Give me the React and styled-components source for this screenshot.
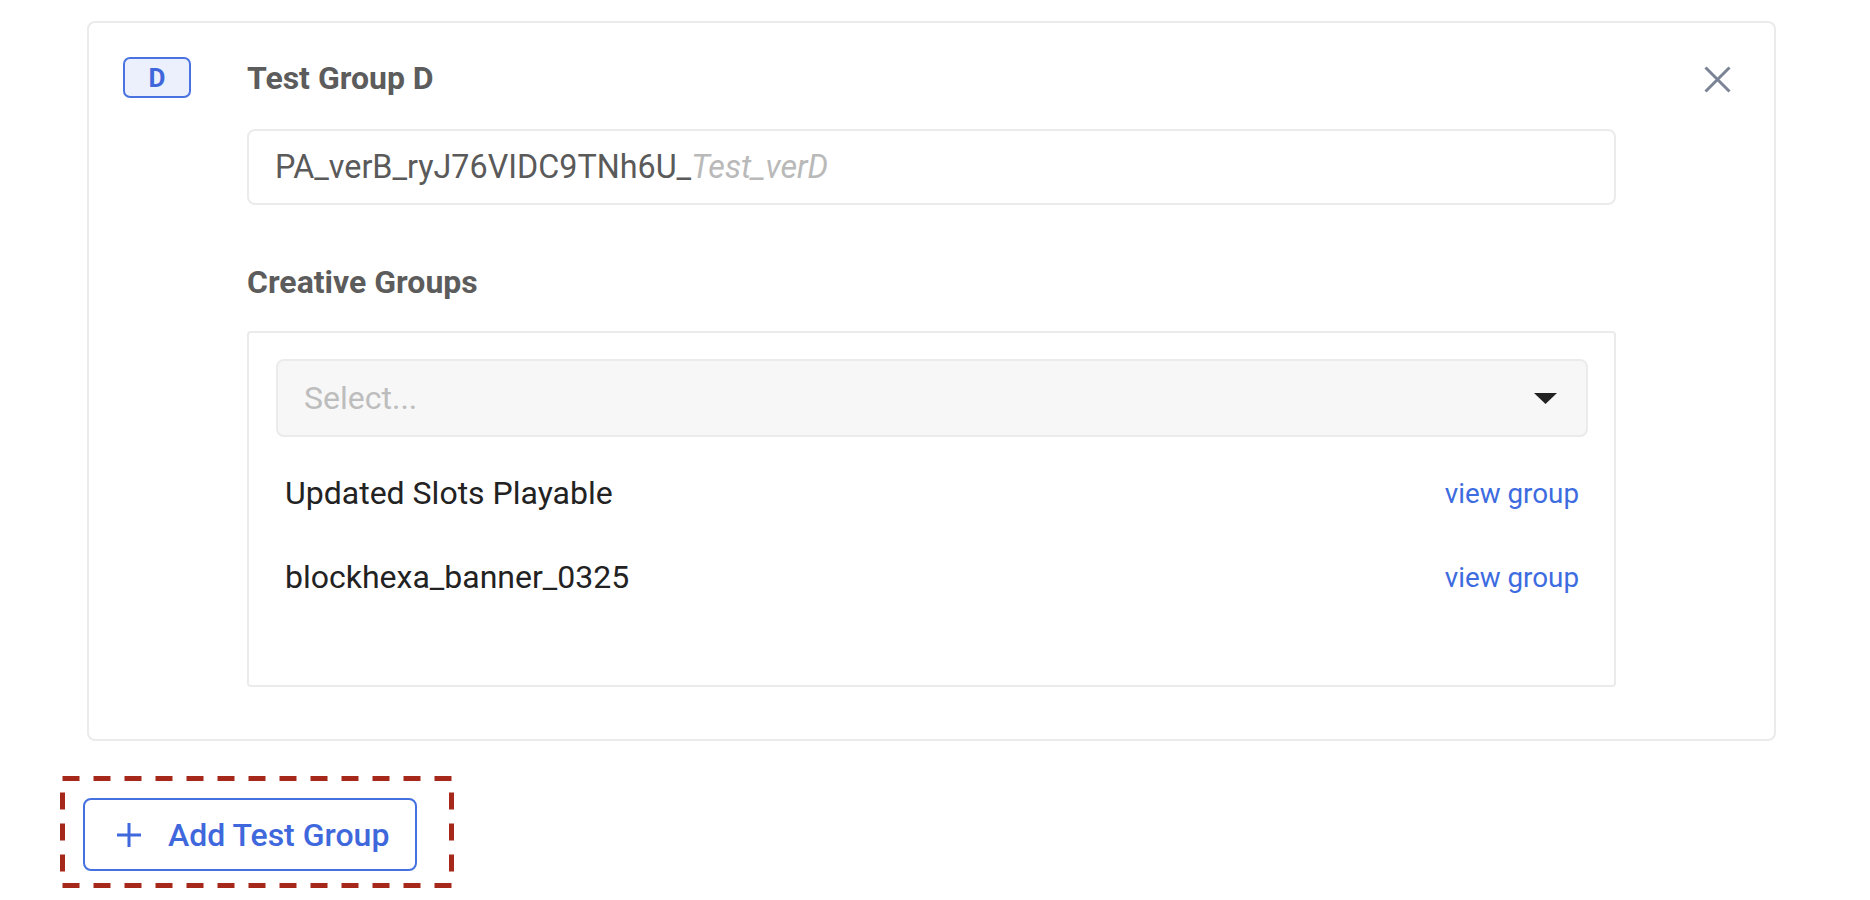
import React from "react";
import styled, { createGlobalStyle } from "styled-components";

const GlobalStyle = createGlobalStyle`
  body {
    margin: 0;
    background: #ffffff;
    font-family: Roboto, "Liberation Sans", sans-serif;
  }
`;

const Page = styled.div`
  min-height: 100vh;
  box-sizing: border-box;
  padding: 21px 94px 20px 83px;
`;

const Card = styled.div`
  margin-left: 4px;
  display: flex;
  align-items: flex-start;
  border: 2px solid #ebebeb;
  border-radius: 8px;
  padding: 34px 43px 52px 34px;
`;

const Badge = styled.div`
  flex: none;
  width: 68px;
  height: 41px;
  box-sizing: border-box;
  display: flex;
  align-items: center;
  justify-content: center;
  border: 2.5px solid #4a72e0;
  border-radius: 7px;
  background: #ebf0fc;
  color: #3f67db;
  font-weight: 700;
  font-size: 26px;
  margin-right: 56px;
`;

const Content = styled.div`
  width: 1369px;
  display: flex;
  flex-direction: column;
`;

const Title = styled.div`
  height: 41px;
  display: flex;
  align-items: center;
  color: #5c5c5c;
  font-weight: 700;
  font-size: 32px;
  margin-bottom: 3px;
`;

const NameField = styled.div`
  margin-top: 28px;
  height: 76px;
  box-sizing: border-box;
  display: flex;
  align-items: center;
  border: 2px solid #ebebeb;
  border-radius: 8px;
  padding: 0 26px;
  font-size: 32.3px;
  color: #5a5a5a;
`;

const Suffix = styled.span`
  font-style: italic;
  color: #b9b9b9;
`;

const SectionLabel = styled.div`
  margin-top: 57px;
  height: 40px;
  line-height: 40px;
  color: #5c5c5c;
  font-weight: 700;
  font-size: 32px;
`;

const GroupBox = styled.div`
  margin-top: 29px;
  border: 2px solid #ebebeb;
  border-radius: 4px;
  padding: 26px 26px 66px 27px;
`;

const SelectBox = styled.div`
  height: 78px;
  box-sizing: border-box;
  display: flex;
  align-items: center;
  justify-content: space-between;
  background: #f7f7f7;
  border: 2px solid #ebebeb;
  border-radius: 8px;
  padding: 0 29px 0 26px;
  font-size: 32px;
  color: #bdbdbd;
`;

const List = styled.div`
  margin-top: 14px;
  display: flex;
  flex-direction: column;
`;

const Row = styled.div`
  height: 84px;
  display: flex;
  align-items: center;
  justify-content: space-between;
  padding: 0 9px;
`;

const RowName = styled.span`
  font-size: 32px;
  color: #222222;
`;

const ViewLink = styled.a`
  font-size: 27.8px;
  color: #3d6ce0;
  text-decoration: none;
  cursor: pointer;
`;

const CloseButton = styled.button`
  flex: none;
  margin-left: auto;
  margin-top: 9px;
  width: 27px;
  height: 27px;
  padding: 0;
  border: none;
  background: none;
  display: flex;
  cursor: pointer;
`;

const AddArea = styled.div`
  position: relative;
  margin-top: 57px;
  width: 334px;
`;

const Highlight = styled.svg`
  position: absolute;
  left: -23px;
  top: -22px;
  overflow: visible;
  pointer-events: none;
`;

const AddButton = styled.button`
  width: 334px;
  height: 73px;
  box-sizing: border-box;
  display: flex;
  align-items: center;
  gap: 27px;
  padding: 0 0 0 32px;
  border: 2px solid #4470e0;
  border-radius: 8px;
  background: #ffffff;
  color: #3f68dc;
  font-family: Roboto, "Liberation Sans", sans-serif;
  font-weight: 500;
  font-size: 32px;
  cursor: pointer;
`;

const groups = [
  { name: "Updated Slots Playable" },
  { name: "blockhexa_banner_0325" },
];

function CloseIcon() {
  return (
    <svg width="27" height="27" viewBox="0 0 27 27">
      <path d="M1.5 1.5 L25.5 25.5 M25.5 1.5 L1.5 25.5" stroke="#7b8497" strokeWidth="3" />
    </svg>
  );
}

function Caret() {
  return (
    <svg width="23" height="11" viewBox="0 0 23 11">
      <path d="M0 0 H23 L11.5 11 Z" fill="#222222" />
    </svg>
  );
}

function PlusIcon() {
  return (
    <svg width="24" height="24" viewBox="0 0 24 24">
      <path d="M12 0 V24 M0 12 H24" stroke="#3f68dc" strokeWidth="3" />
    </svg>
  );
}

export default function App() {
  return (
    <Page>
      <GlobalStyle />
      <Card>
        <Badge>D</Badge>
        <Content>
          <Title>Test Group D</Title>
          <NameField>
            PA_verB_ryJ76VIDC9TNh6U_<Suffix>Test_verD</Suffix>
          </NameField>
          <SectionLabel>Creative Groups</SectionLabel>
          <GroupBox>
            <SelectBox>
              <span>Select...</span>
              <Caret />
            </SelectBox>
            <List>
              {groups.map((g) => (
                <Row key={g.name}>
                  <RowName>{g.name}</RowName>
                  <ViewLink>view group</ViewLink>
                </Row>
              ))}
            </List>
          </GroupBox>
        </Content>
        <CloseButton aria-label="Remove test group">
          <CloseIcon />
        </CloseButton>
      </Card>
      <AddArea>
        <Highlight width="394" height="112" viewBox="0 0 394 112">
          <rect x="2.5" y="2.5" width="389" height="107" fill="none" stroke="#a5281b" strokeWidth="5" strokeDasharray="17 14" />
        </Highlight>
        <AddButton>
          <PlusIcon />
          Add Test Group
        </AddButton>
      </AddArea>
    </Page>
  );
}
